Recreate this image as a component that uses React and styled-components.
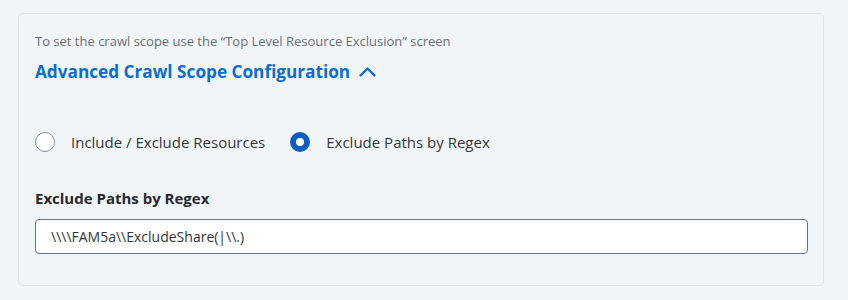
import React, { useState } from "react";
import styled, { createGlobalStyle } from "styled-components";

const Global = createGlobalStyle`
  html, body { margin: 0; padding: 0; background: #f2f5f8; }
  body { font-family: "Open Sans", "Noto Sans", sans-serif; }
  * { box-sizing: border-box; }
`;

const Page = styled.div`
  padding: 13px 24px 0 18px;
`;

const Card = styled.section`
  width: 806px;
  height: 273px;
  border: 1px solid #dfe3e8;
  border-radius: 5px;
  background: #f2f5f8;
  padding: 18px 16px 0 16px;
  display: flex;
  flex-direction: column;
`;

const Hint = styled.p`
  margin: 0;
  font-size: 13px;
  line-height: 18px;
  color: #6a6f76;
`;

const Toggle = styled.button`
  margin-top: 10px;
  padding: 0;
  border: none;
  background: none;
  display: flex;
  align-items: center;
  gap: 9px;
  font-family: inherit;
  font-size: 17.2px;
  font-weight: 700;
  line-height: 24px;
  color: #0a6ed1;
  cursor: pointer;
  align-self: flex-start;
`;

const RadioRow = styled.div`
  margin-top: 48px;
  display: flex;
  align-items: center;
  gap: 25px;
`;

const RadioLabel = styled.label`
  display: flex;
  align-items: center;
  gap: 16px;
  font-size: 15px;
  line-height: 20px;
  color: #32363a;
  cursor: pointer;
`;

const RadioCircle = styled.span`
  width: 20px;
  height: 20px;
  border-radius: 50%;
  flex: none;
  background: #fff;
  border: ${(p) => (p.$checked ? "6.5px solid #0b5fc4" : "1px solid #89919a")};
`;

const FieldLabel = styled.div`
  margin-top: 36px;
  font-size: 15px;
  font-weight: 700;
  line-height: 20px;
  color: #262a2e;
`;

const Input = styled.input`
  margin-top: 11px;
  width: 773px;
  height: 35px;
  border: 1px solid #6a7480;
  border-radius: 4px;
  background: #fff;
  padding: 0 15px;
  font-family: inherit;
  font-size: 14px;
  color: #32363a;
  outline: none;
`;

const Chevron = () => (
  <svg width="17" height="10" viewBox="0 0 17 10" fill="none">
    <path d="M1.5 8.5 L8.5 1.5 L15.5 8.5" stroke="#0a6ed1" strokeWidth="2.4" strokeLinecap="round" strokeLinejoin="round" />
  </svg>
);

export default function App() {
  const [mode, setMode] = useState("regex");
  const [value, setValue] = useState("\\\\\\\\FAM5a\\\\ExcludeShare(|\\\\.)");
  return (
    <Page>
      <Global />
      <Card>
        <Hint>To set the crawl scope use the “Top Level Resource Exclusion” screen</Hint>
        <Toggle type="button">
          Advanced Crawl Scope Configuration
          <Chevron />
        </Toggle>
        <RadioRow>
          <RadioLabel onClick={() => setMode("include")}>
            <RadioCircle $checked={mode === "include"} />
            Include / Exclude Resources
          </RadioLabel>
          <RadioLabel onClick={() => setMode("regex")}>
            <RadioCircle $checked={mode === "regex"} />
            Exclude Paths by Regex
          </RadioLabel>
        </RadioRow>
        <FieldLabel>Exclude Paths by Regex</FieldLabel>
        <Input value={value} onChange={(e) => setValue(e.target.value)} />
      </Card>
    </Page>
  );
}
